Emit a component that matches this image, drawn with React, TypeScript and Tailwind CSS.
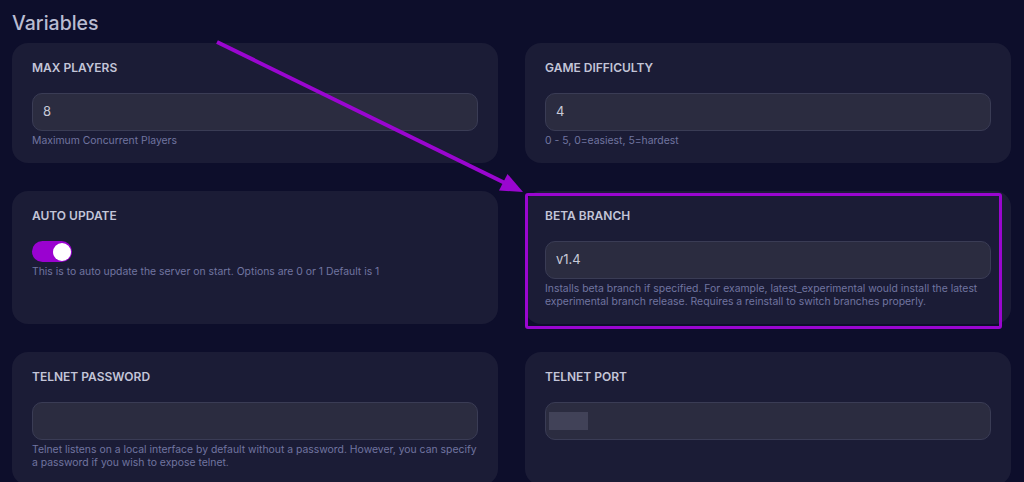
import React from "react";

type Field = {
  id: string;
  label: string;
  value?: string;
  hint?: string;
  kind?: "text" | "toggle" | "hidden";
  marked?: boolean;
};

const fields: Field[] = [
  { id: "max-players", label: "Max Players", value: "8", hint: "Maximum Concurrent Players" },
  { id: "difficulty", label: "Game Difficulty", value: "4", hint: "0 - 5, 0=easiest, 5=hardest" },
  {
    id: "auto-update",
    label: "Auto Update",
    kind: "toggle",
    hint: "This is to auto update the server on start. Options are 0 or 1 Default is 1",
  },
  {
    id: "beta-branch",
    label: "Beta Branch",
    value: "v1.4",
    marked: true,
    hint: "Installs beta branch if specified. For example, latest_experimental would install the latest experimental branch release. Requires a reinstall to switch branches properly.",
  },
  {
    id: "telnet-password",
    label: "Telnet Password",
    value: "",
    hint: "Telnet listens on a local interface by default without a password. However, you can specify a password if you wish to expose telnet.",
  },
  { id: "telnet-port", label: "Telnet Port", kind: "hidden" },
];

function Toggle() {
  return (
    <div className="relative h-[21px] w-10 rounded-full bg-[#9a02d0]">
      <span className="absolute right-[1px] top-[1.5px] h-[18px] w-[18px] rounded-full bg-white" />
    </div>
  );
}

function VariableCard({ f }: { f: Field }) {
  return (
    <div className="relative rounded-2xl bg-[#1b1c36] px-5 pb-4 pt-[17px]">
      <h3 className="text-[12px] font-semibold uppercase leading-4 text-[#c3c5d8]">{f.label}</h3>
      <div className="mt-[17px]">
        {f.kind === "toggle" ? (
          <Toggle />
        ) : (
          <div className="flex h-[38px] items-center rounded-[10px] border border-[#3a3c55] bg-[#2b2c40] px-[10px] text-[13px] text-[#c7c9d8]">
            {f.kind === "hidden" ? (
              <span className="-ml-[7px] h-[18px] w-[39px] bg-[#414258] blur-[0.6px]" />
            ) : (
              f.value
            )}
          </div>
        )}
      </div>
      {f.hint && (
        <p className="mt-[3px] text-[10.4px] leading-[13px] text-[#7175a0]">{f.hint}</p>
      )}
      {f.marked && (
        <div className="pointer-events-none absolute -bottom-[5px] left-0 right-[9px] top-[2px] rounded-[3px] border-[3px] border-[#9a06d0]" />
      )}
    </div>
  );
}

export default function App() {
  return (
    <div
      className="relative h-[482px] overflow-hidden bg-[#0d0e2b] pl-3 pr-[13px] pt-[9px]"
      style={{ fontFamily: "Inter, 'Noto Sans', sans-serif" }}
    >
      <h2 className="text-[19.5px] font-medium leading-7 text-[#b9bcd1]">Variables</h2>
      <div className="mt-[6px] grid grid-cols-2 gap-x-[27px] gap-y-[28px]">
        {fields.map((f) => (
          <VariableCard key={f.id} f={f} />
        ))}
      </div>

      {/* pointer arrow toward the beta branch card */}
      <svg className="pointer-events-none absolute left-0 top-0" width="1024" height="482" viewBox="0 0 1024 482">
        <line x1="217" y1="42" x2="506" y2="183.5" stroke="#9a06d0" strokeWidth="4" />
        <polygon points="523,192 499,190.5 507.5,174" fill="#9a06d0" />
      </svg>
    </div>
  );
}
